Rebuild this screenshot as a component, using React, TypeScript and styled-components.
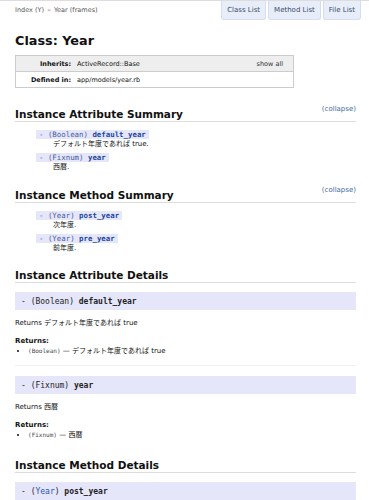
import styled, { createGlobalStyle } from "styled-components";

const GlobalStyle = createGlobalStyle`
  body {
    margin: 0;
    background: #fff;
    color: #111;
    font-family: "DejaVu Sans", "Noto Sans CJK JP", sans-serif;
  }
`;

const mono = `"DejaVu Sans Mono", "Liberation Mono", "Noto Sans CJK JP", monospace`;

const Header = styled.header`
    display: flex;
    justify-content: space-between;
    align-items: flex-start;
    height: 20px;
    border-top: 1px solid #ddd;
`;

const Crumbs = styled.div`
    padding: 5px 0 0 15px;
    font-size: 6.5px;
    color: #555;
    span {
        color: #999;
        margin: 0 3px;
    }
`;

const NavButtons = styled.div`
    display: flex;
    gap: 2px;
    margin-right: 8px;
`;

const NavButton = styled.a`
    display: flex;
    align-items: center;
    height: 18px;
    padding: 0 5px;
    background: #e7eef9;
    border: 1px solid #d6deec;
    border-top: none;
    border-radius: 0 0 3px 3px;
    font-size: 7px;
    color: #3b4b6a;
`;

const Content = styled.main`
    padding: 0 13px 0 15px;
`;

const Title = styled.h1`
    margin: 10px 0 0;
    font-size: 12.8px;
    line-height: 20px;
    font-weight: bold;
`;

const InfoBox = styled.dl`
    width: 277px;
    margin: 4px 0 0;
    border: 1px solid #ccc;
    font-size: 6.5px;
`;

const InfoRow = styled.div<{ $shade?: boolean }>`
    display: grid;
    grid-template-columns: 55px 1fr auto;
    column-gap: 6px;
    align-items: center;
    height: 15px;
    background: ${({ $shade }) => ($shade ? "#eee" : "#fff")};
    & + & {
        border-top: 1px solid #ccc;
    }
    dt {
        text-align: right;
        font-weight: bold;
    }
    dd {
        margin: 0;
    }
`;

const ShowAll = styled.a`
    padding-right: 10px;
    color: #333;
`;

const SectionTitle = styled.h2<{ $top: number }>`
    display: flex;
    justify-content: space-between;
    align-items: flex-end;
    margin: ${({ $top }) => $top}px 0 0;
    padding-bottom: 1px;
    border-bottom: 1px solid #ddd;
    font-size: 10.5px;
    line-height: 12px;
    font-weight: bold;
`;

const Collapse = styled.a`
    font-size: 7px;
    font-weight: normal;
    color: #3f6aa8;
    margin-bottom: 5px;
`;

const SummaryList = styled.ul`
    list-style: none;
    margin: 8px 0 0;
    padding: 0 0 0 21px;
`;

const SummaryItem = styled.li`
    margin-bottom: 4px;
`;

const SummarySig = styled.div`
    width: fit-content;
    height: 9px;
    line-height: 9px;
    padding: 0 3px;
    background: #e6e6fb;
    font-family: ${mono};
    font-size: 7.4px;
    color: #4460a0;
    b {
        color: #1a47a0;
    }
`;

const SummaryDesc = styled.div`
    padding-left: 17px;
    font-size: 7px;
    line-height: 10px;
`;

const Method = styled.section<{ $divided?: boolean }>`
    margin-top: 9px;
    padding-top: ${({ $divided }) => ($divided ? "10px" : "0")};
    border-top: ${({ $divided }) => ($divided ? "1px solid #f0f0f0" : "none")};
`;

const Signature = styled.h3`
    display: flex;
    align-items: center;
    height: 18px;
    margin: 0;
    padding-left: 6px;
    background: #e6e6fb;
    font-family: ${mono};
    font-size: 8px;
    font-weight: normal;
    color: #222;
    b {
        margin-left: 0.6em;
    }
    a {
        color: #1f55b0;
    }
`;

const Docstring = styled.p`
    margin: 8px 0 0;
    font-size: 7px;
    line-height: 10px;
`;

const ReturnsLabel = styled.h4`
    margin: 8px 0 0;
    font-size: 7px;
    line-height: 10px;
    font-weight: bold;
`;

const ReturnList = styled.ul`
    margin: 0;
    padding-left: 13px;
    font-size: 7px;
    line-height: 10px;
    code {
        font-family: ${mono};
        font-size: 6px;
        color: #444;
    }
`;

type Sig = { type: string; name: string; desc: string };

const attributes: Sig[] = [
    { type: "Boolean", name: "default_year", desc: "デフォルト年度であれば true" },
    { type: "Fixnum", name: "year", desc: "西暦" },
];

const methods: Sig[] = [
    { type: "Year", name: "post_year", desc: "次年度" },
    { type: "Year", name: "pre_year", desc: "前年度" },
];

const Summary = ({ items }: { items: Sig[] }) => (
    <SummaryList>
        {items.map((item) => (
            <SummaryItem key={item.name}>
                <SummarySig>
                    - ({item.type}) <b>{item.name}</b>
                </SummarySig>
                <SummaryDesc>{item.desc}.</SummaryDesc>
            </SummaryItem>
        ))}
    </SummaryList>
);

const App = () => {
    return (
        <>
            <GlobalStyle />
            <Header>
                <Crumbs>
                    Index (Y)<span>»</span>Year (frames)
                </Crumbs>
                <NavButtons>
                    <NavButton>Class List</NavButton>
                    <NavButton>Method List</NavButton>
                    <NavButton>File List</NavButton>
                </NavButtons>
            </Header>
            <Content>
                <Title>Class: Year</Title>
                <InfoBox>
                    <InfoRow $shade>
                        <dt>Inherits:</dt>
                        <dd>ActiveRecord::Base</dd>
                        <ShowAll>show all</ShowAll>
                    </InfoRow>
                    <InfoRow>
                        <dt>Defined in:</dt>
                        <dd>app/models/year.rb</dd>
                    </InfoRow>
                </InfoBox>

                <SectionTitle $top={15}>
                    Instance Attribute Summary
                    <Collapse>(collapse)</Collapse>
                </SectionTitle>
                <Summary items={attributes} />

                <SectionTitle $top={12}>
                    Instance Method Summary
                    <Collapse>(collapse)</Collapse>
                </SectionTitle>
                <Summary items={methods} />

                <SectionTitle $top={16}>Instance Attribute Details</SectionTitle>
                {attributes.map((item, i) => (
                    <Method key={item.name} $divided={i > 0}>
                        <Signature>
                            - ({item.type})<b>{item.name}</b>
                        </Signature>
                        <Docstring>Returns {item.desc}</Docstring>
                        <ReturnsLabel>Returns:</ReturnsLabel>
                        <ReturnList>
                            <li>
                                <code>({item.type})</code> — {item.desc}
                            </li>
                        </ReturnList>
                    </Method>
                ))}

                <SectionTitle $top={19}>Instance Method Details</SectionTitle>
                <Method>
                    <Signature>
                        - (<a>Year</a>)<b>post_year</b>
                    </Signature>
                </Method>
            </Content>
        </>
    );
};

export default App;
